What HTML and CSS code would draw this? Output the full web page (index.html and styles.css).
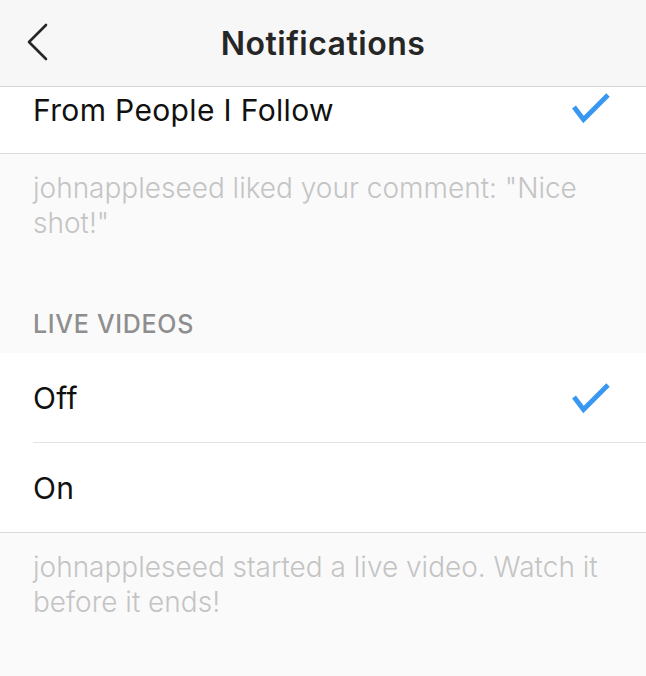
FILE: index.html
```html
<!DOCTYPE html>
<html lang="en">
<head>
  <meta charset="UTF-8">
  <meta name="viewport" content="width=device-width, initial-scale=1.0">
  <title>Notifications</title>
  <link rel="stylesheet" href="styles.css">
</head>
<body>
  <div class="nav">
    <svg class="back" width="24" height="40" viewBox="0 0 24 40">
      <path d="M20 2 L3 19 L20 36" fill="none" stroke="#262626" stroke-width="2.6" stroke-linecap="round" stroke-linejoin="round"/>
    </svg>
    <h1>Notifications</h1>
  </div>

  <div class="group">
    <div class="row row-top">
      <span>From People I Follow</span>
      <svg class="check" width="40" height="32" viewBox="0 0 40 32">
        <path d="M3 15 L12.5 27.5 L37 3" fill="none" stroke="#3897f0" stroke-width="4.8" stroke-linejoin="miter"/>
      </svg>
    </div>
  </div>

  <div class="note">
    <p>johnappleseed liked your comment: "Nice shot!"</p>
    <h2>LIVE VIDEOS</h2>
  </div>

  <div class="group">
    <div class="row">
      <span>Off</span>
      <svg class="check" width="40" height="32" viewBox="0 0 40 32">
        <path d="M3 15 L12.5 27.5 L37 3" fill="none" stroke="#3897f0" stroke-width="4.8" stroke-linejoin="miter"/>
      </svg>
    </div>
    <div class="row">
      <span>On</span>
    </div>
  </div>

  <div class="note">
    <p>johnappleseed started a live video. Watch it before it ends!</p>
  </div>
</body>
</html>
```

FILE: styles.css
```css
body {
  margin: 0;
  background: #fafafa;
  font-family: Inter, "Liberation Sans", Arial, sans-serif;
  color: #000;
}
.nav {
  height: 86px;
  background: #f7f7f7;
  border-bottom: 1px solid #d6d6d6;
  display: flex;
  align-items: center;
  justify-content: center;
  position: relative;
}
.nav h1 {
  margin: 0;
  font-size: 32px;
  font-weight: 600;
  letter-spacing: 0.5px;
  color: #262626;
}
.back {
  position: absolute;
  left: 26px;
  top: 23px;
}
.group {
  background: #fff;
  border-bottom: 1px solid #dbdbdb;
}
.row {
  height: 89px;
  display: flex;
  align-items: center;
  justify-content: space-between;
  padding: 0 35px 0 33px;
  font-size: 30px;
  letter-spacing: 0.35px;
  color: #111;
}
.row + .row {
  border-top: 1px solid #e3e3e3;
  margin-left: 33px;
  padding-left: 0;
}
.row-top {
  height: 66px;
  align-items: flex-start;
}
.row-top span {
  line-height: 46px;
}
.row-top .check {
  margin-top: 5px;
}
.note {
  padding: 17px 33px 14px;
}
.note p {
  margin: 0;
  font-size: 28px;
  line-height: 35px;
  font-weight: 300;
  color: #c4c4c4;
}
.note h2 {
  margin: 68px 0 0;
  font-size: 25px;
  line-height: 30px;
  font-weight: 500;
  letter-spacing: 0.7px;
  color: #8e8e8e;
}
```
